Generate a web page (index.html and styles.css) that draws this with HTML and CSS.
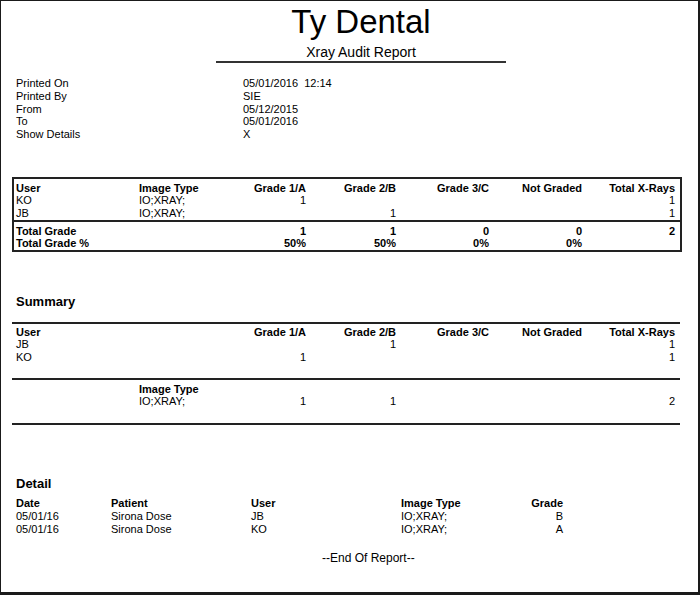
FILE: index.html
```html
<!DOCTYPE html>
<html>
<head>
<meta charset="utf-8">
<link rel="stylesheet" href="styles.css">
</head>
<body>
<div class="page">
  <header class="title-block">
    <h1 class="title">Ty Dental</h1>
    <div class="subtitle">Xray Audit Report</div>
  </header>

  <div class="info">
    <div class="info-row"><span>Printed On</span><span>05/01/2016&nbsp;&nbsp;12:14</span></div>
    <div class="info-row"><span>Printed By</span><span>SIE</span></div>
    <div class="info-row"><span>From</span><span>05/12/2015</span></div>
    <div class="info-row"><span>To</span><span>05/01/2016</span></div>
    <div class="info-row"><span>Show Details</span><span>X</span></div>
  </div>

  <section class="box">
    <div class="box-body">
      <div class="row bold">
        <span>User</span><span>Image Type</span><span class="r">Grade 1/A</span><span class="r">Grade 2/B</span><span class="r">Grade 3/C</span><span class="r">Not Graded</span><span class="r">Total X-Rays</span>
      </div>
      <div class="row">
        <span>KO</span><span>IO;XRAY;</span><span class="r">1</span><span class="r"></span><span class="r"></span><span class="r"></span><span class="r">1</span>
      </div>
      <div class="row">
        <span>JB</span><span>IO;XRAY;</span><span class="r"></span><span class="r">1</span><span class="r"></span><span class="r"></span><span class="r">1</span>
      </div>
    </div>
    <div class="box-foot">
      <div class="row bold">
        <span class="span2">Total Grade</span><span class="r">1</span><span class="r">1</span><span class="r">0</span><span class="r">0</span><span class="r">2</span>
      </div>
      <div class="row bold">
        <span class="span2">Total Grade %</span><span class="r">50%</span><span class="r">50%</span><span class="r">0%</span><span class="r">0%</span><span class="r"></span>
      </div>
    </div>
  </section>

  <h2 class="section-title summary-title">Summary</h2>
  <section class="summary">
    <div class="sum-users">
      <div class="row bold">
        <span class="span2">User</span><span class="r">Grade 1/A</span><span class="r">Grade 2/B</span><span class="r">Grade 3/C</span><span class="r">Not Graded</span><span class="r">Total X-Rays</span>
      </div>
      <div class="row">
        <span class="span2">JB</span><span class="r"></span><span class="r">1</span><span class="r"></span><span class="r"></span><span class="r">1</span>
      </div>
      <div class="row">
        <span class="span2">KO</span><span class="r">1</span><span class="r"></span><span class="r"></span><span class="r"></span><span class="r">1</span>
      </div>
    </div>
    <div class="sum-types">
      <div class="row bold">
        <span></span><span>Image Type</span><span class="r"></span><span class="r"></span><span class="r"></span><span class="r"></span><span class="r"></span>
      </div>
      <div class="row">
        <span></span><span>IO;XRAY;</span><span class="r">1</span><span class="r">1</span><span class="r"></span><span class="r"></span><span class="r">2</span>
      </div>
    </div>
  </section>

  <h2 class="section-title detail-title">Detail</h2>
  <section class="detail">
    <div class="drow bold">
      <span>Date</span><span>Patient</span><span>User</span><span>Image Type</span><span class="r">Grade</span>
    </div>
    <div class="drow">
      <span>05/01/16</span><span>Sirona Dose</span><span>JB</span><span>IO;XRAY;</span><span class="r">B</span>
    </div>
    <div class="drow">
      <span>05/01/16</span><span>Sirona Dose</span><span>KO</span><span>IO;XRAY;</span><span class="r">A</span>
    </div>
  </section>

  <div class="end">--End Of Report--</div>
</div>
</body>
</html>
```

FILE: styles.css
```css
html, body {
  margin: 0;
  padding: 0;
  background: #fff;
}

body {
  font-family: "Liberation Sans", Arial, sans-serif;
  font-size: 11px;
  color: #000;
}

.page {
  box-sizing: border-box;
  width: 700px;
  height: 595px;
  border-style: solid;
  border-color: #1a1a1a;
  border-width: 1px 2px 3px 1px;
  padding: 3px 0 0 11px;
  overflow: hidden;
}

.title-block {
  margin-left: 204px;
  width: 290px;
  border-bottom: 2px solid #333;
  padding-bottom: 1px;
  text-align: center;
}

.title {
  margin: 0;
  font-size: 33px;
  font-weight: normal;
  line-height: 36px;
}

.subtitle {
  margin-top: 4px;
  font-size: 14px;
  line-height: 16px;
}

.info {
  margin-top: 14px;
  padding-left: 4px;
}

.info-row {
  display: grid;
  grid-template-columns: 227px auto;
  line-height: 12.75px;
  height: 12.75px;
}

.row {
  display: grid;
  grid-template-columns: 123px 107px 60px 90px 93px 93px 93px;
  line-height: 12.5px;
  height: 12.5px;
  white-space: nowrap;
}

.row .r {
  text-align: right;
}

.row .span2 {
  grid-column: span 2;
}

.bold {
  font-weight: bold;
}

.box {
  margin-top: 36px;
  width: 666px;
  border: 2px solid #222;
}

.box-body {
  padding: 3px 5px 1px 2px;
  border-bottom: 2px solid #222;
}

.box-foot {
  padding: 2.5px 5px 0 2px;
}

.section-title {
  margin: 0;
  padding-left: 4px;
  font-size: 13px;
  line-height: 16px;
  font-weight: bold;
}

.summary-title {
  margin-top: 42.5px;
}

.summary {
  margin-top: 11.5px;
  width: 668px;
}

.sum-users {
  border-top: 2px solid #222;
  padding: 2px 0 14.5px 4px;
}

.sum-types {
  border-top: 2px solid #222;
  border-bottom: 2px solid #222;
  padding: 3px 0 15px 4px;
}

.detail-title {
  margin-top: 51.5px;
}

.detail {
  margin-top: 5px;
  padding-left: 4px;
}

.drow {
  display: grid;
  grid-template-columns: 95px 140px 150px 126px 36px;
  line-height: 13px;
  height: 13px;
  white-space: nowrap;
}

.drow .r {
  text-align: right;
}

.end {
  margin-top: 15px;
  padding-left: 310px;
  font-size: 12px;
  line-height: 14px;
}
```
